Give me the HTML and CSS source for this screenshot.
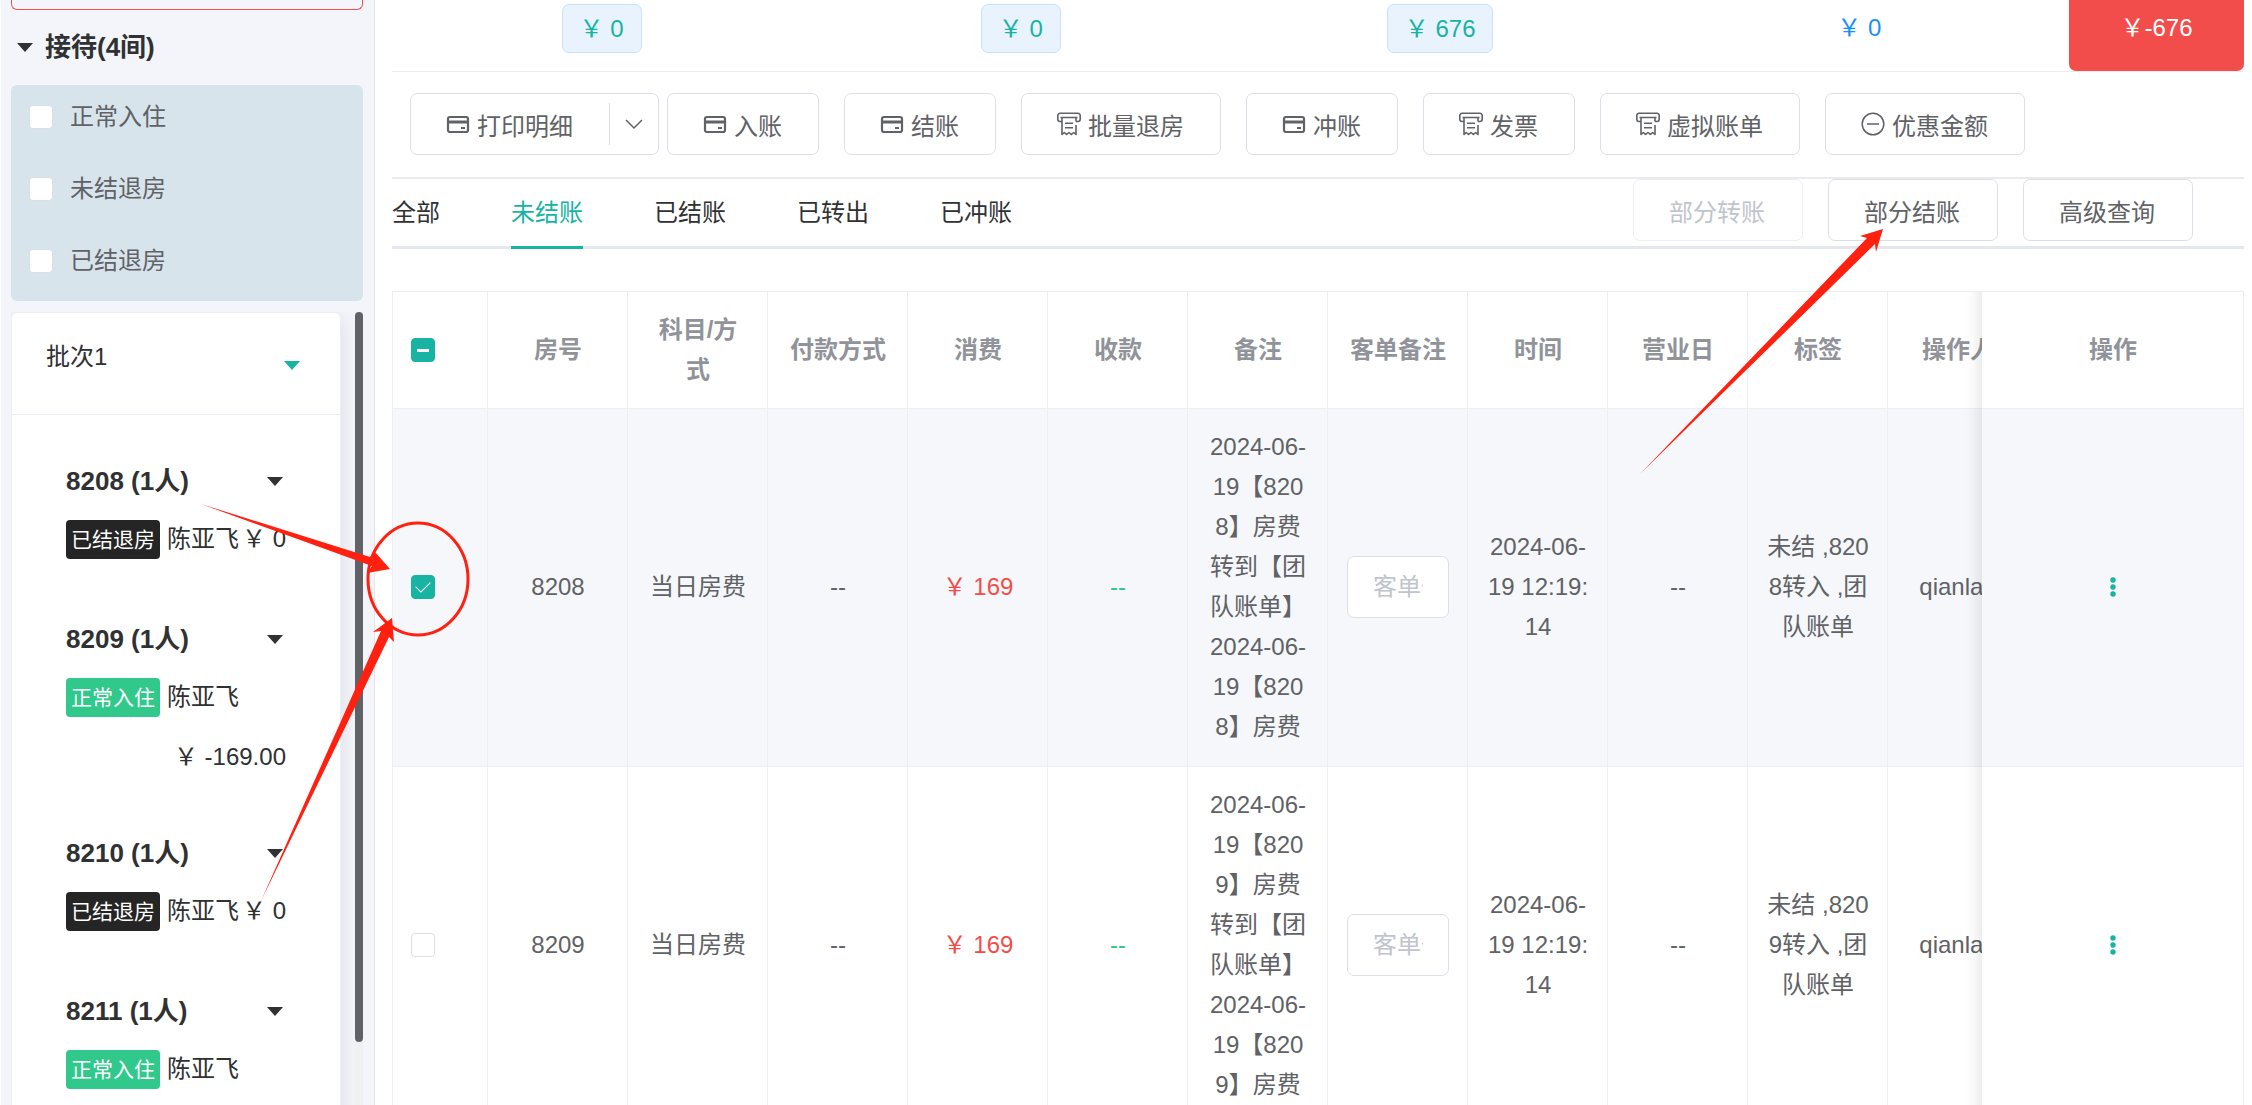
FILE: index.html
```html
<!DOCTYPE html>
<html lang="zh-CN">
<head>
    <meta charset="UTF-8">
    <meta name="viewport" content="width=device-width, initial-scale=1.0">
    <title>团队账单</title>
    <link rel="stylesheet" href="styles.css">
</head>
<body>
    <!-- Shared icons -->
    <svg class="icon-defs" aria-hidden="true">
        <symbol id="icon-card" viewBox="0 0 24 24">
            <rect x="2" y="5" width="20" height="15" rx="2" fill="none" stroke="currentColor" stroke-width="2.200"/>
            <path d="M2 10h20" stroke="currentColor" stroke-width="3"/>
            <path d="M15 16h4" stroke="currentColor" stroke-width="2"/>
        </symbol>
        <symbol id="icon-receipt" viewBox="0 0 24 24">
            <g fill="none" stroke="currentColor" stroke-width="1.600" stroke-linejoin="round">
                <path d="M5 9.500H3A2.200 2.200 0 0 1 .8 7.300V3.500A2.200 2.200 0 0 1 3 1.300h18A2.200 2.200 0 0 1 23.200 3.500v3.800A2.200 2.200 0 0 1 21 9.500h-2"/>
                <path d="M3.500 5.500h17M5 5.500V22.500l2.300-2 2.300 2 2.400-2 2.400 2 2.300-2 2.300 2V13M19 5.500v4M8 11.200h8M8 15.700h8"/>
            </g>
        </symbol>
        <symbol id="icon-minus" viewBox="0 0 24 24">
            <g fill="none" stroke="currentColor" stroke-width="1.500">
                <circle cx="12" cy="12" r="10.800"/>
                <path d="M6 12h12"/>
            </g>
        </symbol>
    </svg>

    <div class="app">
        <aside class="sidebar">
            <div class="alert-card"></div>
            <h2 class="section-title"><span class="caret"></span>接待(4间)</h2>

            <div class="status-filter">
                <label class="filter-item"><input type="checkbox" class="checkbox">正常入住</label>
                <label class="filter-item"><input type="checkbox" class="checkbox">未结退房</label>
                <label class="filter-item"><input type="checkbox" class="checkbox">已结退房</label>
            </div>

            <div class="room-scroll">
                <div class="room-view">
                    <div class="batch-card">
                        <div class="batch-header">批次1<span class="caret caret-teal"></span></div>
                        <div class="room-list">
                            <div class="room">
                                <h3 class="room-title">8208 (1人)<span class="caret"></span></h3>
                                <div class="room-meta">
                                    <span class="tag tag-dark">已结退房</span>
                                    <span class="guest">陈亚飞</span>
                                    <span class="balance">￥ 0</span>
                                </div>
                            </div>
                            <div class="room">
                                <h3 class="room-title">8209 (1人)<span class="caret"></span></h3>
                                <div class="room-meta">
                                    <span class="tag tag-green">正常入住</span>
                                    <span class="guest">陈亚飞</span>
                                    <span class="balance">￥ -169.00</span>
                                </div>
                            </div>
                            <div class="room">
                                <h3 class="room-title">8210 (1人)<span class="caret"></span></h3>
                                <div class="room-meta">
                                    <span class="tag tag-dark">已结退房</span>
                                    <span class="guest">陈亚飞</span>
                                    <span class="balance">￥ 0</span>
                                </div>
                            </div>
                            <div class="room">
                                <h3 class="room-title">8211 (1人)<span class="caret"></span></h3>
                                <div class="room-meta">
                                    <span class="tag tag-green">正常入住</span>
                                    <span class="guest">陈亚飞</span>
                                </div>
                            </div>
                        </div>
                    </div>
                </div>
                <div class="scroll-track"><div class="scroll-thumb"></div></div>
            </div>
        </aside>

        <main class="main">
            <div class="summary">
                <div class="summary-cell"><span class="amount-tag">￥ 0</span></div>
                <div class="summary-cell"><span class="amount-tag">￥ 0</span></div>
                <div class="summary-cell"><span class="amount-tag">￥ 676</span></div>
                <div class="summary-cell summary-blue">￥ 0</div>
                <div class="summary-cell summary-red">￥-676</div>
            </div>

            <div class="toolbar">
                <div class="split-button">
                    <button type="button" class="split-main"><svg class="icon"><use href="#icon-card"/></svg>打印明细</button>
                    <button type="button" class="split-arrow" aria-label="更多">
                        <svg width="18" height="12" viewBox="0 0 18 12"><path d="M1 2l8 8 8-8" fill="none" stroke="currentColor" stroke-width="1.500"/></svg>
                    </button>
                </div>
                <div class="button-group">
                    <button type="button" class="btn"><svg class="icon"><use href="#icon-card"/></svg>入账</button>
                    <button type="button" class="btn"><svg class="icon"><use href="#icon-card"/></svg>结账</button>
                    <button type="button" class="btn"><svg class="icon"><use href="#icon-receipt"/></svg>批量退房</button>
                    <button type="button" class="btn"><svg class="icon"><use href="#icon-card"/></svg>冲账</button>
                    <button type="button" class="btn"><svg class="icon"><use href="#icon-receipt"/></svg>发票</button>
                    <button type="button" class="btn"><svg class="icon"><use href="#icon-receipt"/></svg>虚拟账单</button>
                    <button type="button" class="btn"><svg class="icon"><use href="#icon-minus"/></svg>优惠金额</button>
                </div>
            </div>

            <div class="tab-bar">
                <nav class="tabs">
                    <a href="#all" class="tab">全部</a>
                    <a href="#open" class="tab tab-active">未结账</a>
                    <a href="#settled" class="tab">已结账</a>
                    <a href="#moved" class="tab">已转出</a>
                    <a href="#reversed" class="tab">已冲账</a>
                </nav>
                <div class="button-group">
                    <button type="button" class="btn" disabled>部分转账</button>
                    <button type="button" class="btn">部分结账</button>
                    <button type="button" class="btn">高级查询</button>
                </div>
            </div>

            <div class="table-wrap">
                <table class="bill-table">
                    <colgroup>
                        <col class="col-check">
                        <col span="11" class="col-data">
                        <col class="col-action">
                    </colgroup>
                    <thead>
                        <tr>
                            <th class="cell-check"><input type="checkbox" class="checkbox" id="checkAll" aria-label="全选"></th>
                            <th>房号</th>
                            <th>科目/方式</th>
                            <th>付款方式</th>
                            <th>消费</th>
                            <th>收款</th>
                            <th>备注</th>
                            <th>客单备注</th>
                            <th>时间</th>
                            <th>营业日</th>
                            <th>标签</th>
                            <th>操作人</th>
                            <th class="cell-action">操作</th>
                        </tr>
                    </thead>
                    <tbody>
                        <tr class="row-selected">
                            <td class="cell-check"><input type="checkbox" class="checkbox" aria-label="选择8208" checked></td>
                            <td>8208</td>
                            <td>当日房费</td>
                            <td>--</td>
                            <td class="text-red">￥ 169</td>
                            <td class="text-green">--</td>
                            <td>2024-06-19【8208】房费转到【团队账单】2024-06-19【8208】房费</td>
                            <td><input type="text" class="note-input" placeholder="客单备注" aria-label="客单备注"></td>
                            <td>2024-06-19 12:19:14</td>
                            <td>--</td>
                            <td>未结 ,8208转入 ,团队账单</td>
                            <td>qianlan</td>
                            <td class="cell-action">
                                <button type="button" class="more-button" aria-label="更多操作">
                                    <svg width="6" height="20" viewBox="0 0 6 20" fill="currentColor"><circle cx="3" cy="3" r="2.700"/><circle cx="3" cy="10" r="2.700"/><circle cx="3" cy="17" r="2.700"/></svg>
                                </button>
                            </td>
                        </tr>
                        <tr>
                            <td class="cell-check"><input type="checkbox" class="checkbox" aria-label="选择8209"></td>
                            <td>8209</td>
                            <td>当日房费</td>
                            <td>--</td>
                            <td class="text-red">￥ 169</td>
                            <td class="text-green">--</td>
                            <td>2024-06-19【8209】房费转到【团队账单】2024-06-19【8209】房费</td>
                            <td><input type="text" class="note-input" placeholder="客单备注" aria-label="客单备注"></td>
                            <td>2024-06-19 12:19:14</td>
                            <td>--</td>
                            <td>未结 ,8209转入 ,团队账单</td>
                            <td>qianlan</td>
                            <td class="cell-action">
                                <button type="button" class="more-button" aria-label="更多操作">
                                    <svg width="6" height="20" viewBox="0 0 6 20" fill="currentColor"><circle cx="3" cy="3" r="2.700"/><circle cx="3" cy="10" r="2.700"/><circle cx="3" cy="17" r="2.700"/></svg>
                                </button>
                            </td>
                        </tr>
                    </tbody>
                </table>
            </div>
        </main>

        <!-- Red guide marks drawn over the page -->
        <svg class="marks" aria-hidden="true">
            <ellipse cx="418" cy="579" rx="50" ry="56" fill="none" stroke="#ff2010" stroke-width="3"/>
            <polygon points="201,504 370,557 375,552 390,569 367,573 372,566" fill="#ff2010"/>
            <polygon points="261,901 381,631 373,632 392,618 394,642 389,637" fill="#ff2010"/>
            <polygon points="1640,474 1867,238 1860,236 1883,229 1876,252 1875,244" fill="#ff2010"/>
        </svg>
    </div>

    <script>
        // Only some rows are selected
        document.getElementById('checkAll').indeterminate = true;
    </script>
</body>
</html>
```

FILE: styles.css
```css
* {
    box-sizing: border-box;
}

body {
    margin: 0;
    font-family: "Liberation Sans", "Noto Sans CJK SC", sans-serif;
    font-size: 24px;
    line-height: 40px;
    color: #303133;
    background-color: #fff;
}

button,
input {
    font-family: inherit;
    font-size: inherit;
    color: inherit;
}

h2,
h3 {
    margin: 0;
    font-size: 26px;
}

.icon-defs {
    display: none;
}

.app {
    position: relative;
    display: flex;
    height: 100vh;
    overflow: hidden;
}

/* Sidebar */
.sidebar {
    display: flex;
    flex-direction: column;
    flex: none;
    width: 374px;
    margin-left: 1px;
    padding: 0 11px 0 10px;
    background-color: #f3f5fa;
    border-right: 1px solid #e4e4e6;
}

.alert-card {
    height: 10px;
    border: 1px solid #f05050;
    border-top: none;
    border-radius: 0 0 6px 6px;
}

.section-title {
    display: flex;
    align-items: center;
    gap: 12px;
    padding: 17px 6px 18px;
}

.caret {
    border: 8px solid transparent;
    border-top: 9px solid #303133;
    border-bottom: none;
}

.caret-teal {
    border-top-color: #17b3a3;
}

.status-filter {
    padding: 1px 0 9px 18px;
    border-radius: 6px;
    background-color: #d8e4ec;
}

.filter-item {
    display: flex;
    align-items: center;
    gap: 17px;
    height: 62px;
    margin-bottom: 10px;
    color: #606266;
}

.filter-item:last-child {
    margin-bottom: 0;
}

.checkbox {
    appearance: none;
    display: grid;
    place-items: center;
    width: 24px;
    height: 24px;
    margin: 0;
    border: 1px solid #dcdfe6;
    border-radius: 4px;
    background-color: #fff;
}

.checkbox:checked,
.checkbox:indeterminate {
    border-color: #17b3a3;
    background-color: #17b3a3;
}

.checkbox:checked::after {
    content: '';
    width: 7px;
    height: 13px;
    margin-bottom: 4px;
    border: solid #fff;
    border-width: 0 1px 1px 0;
    transform: rotate(45deg);
}

.checkbox:indeterminate::after {
    content: '';
    width: 12px;
    height: 3px;
    background-color: #fff;
}

.room-scroll {
    display: flex;
    flex: 1;
    min-height: 0;
    margin-top: 11px;
}

.room-view {
    flex: 1;
    overflow: hidden;
    padding-right: 14px;
}

.batch-card {
    border: 1px solid #ebeef5;
    border-radius: 6px;
    background-color: #fff;
    box-shadow: 0 4px 21px rgba(0, 0, 0, 0.1);
}

.batch-header {
    display: flex;
    align-items: flex-end;
    justify-content: space-between;
    padding: 31px 40px 44px 34px;
    line-height: 26px;
    border-bottom: 1px solid #ebeef5;
}

.room-list {
    padding: 46px 54px 0;
}

.room {
    padding-bottom: 60px;
}

.room-title {
    display: flex;
    align-items: center;
    justify-content: space-between;
    margin-bottom: 18px;
    padding-right: 3px;
}

.room-meta {
    display: flex;
    flex-wrap: wrap;
    align-items: center;
    row-gap: 24px;
}

.tag {
    padding: 0 5px;
    font-size: 21px;
    line-height: 39px;
    color: #fff;
    border-radius: 4px;
}

.tag-dark {
    background-color: #252525;
}

.tag-green {
    background-color: #30c88b;
}

.guest {
    margin-left: 7px;
}

.balance {
    margin-left: auto;
    line-height: 32px;
}

.scroll-track {
    width: 8px;
    background-color: #f0f0f0;
}

.scroll-thumb {
    height: 92%;
    border-radius: 4px;
    background-color: #606266;
}

/* Main area */
.main {
    flex: 1;
    min-width: 0;
    padding: 0 8px 0 17px;
    overflow: hidden;
}

.summary {
    display: grid;
    grid-template-columns: repeat(4, 1fr) 175px;
    height: 72px;
    border-bottom: 1px solid #ebeef0;
}

.summary-cell {
    display: flex;
    justify-content: center;
    align-items: flex-start;
    padding-top: 4px;
    line-height: 47px;
    color: #17b3a3;
}

.amount-tag {
    padding: 0 17px;
    border: 1px solid #c6e2ff;
    border-radius: 7px;
    background-color: #e8f3fe;
}

.summary-blue {
    color: #1890ff;
}

.summary-red {
    color: #fff;
    background-color: #f34d4b;
    border-radius: 0 0 7px 7px;
}

.toolbar {
    display: flex;
    gap: 8px;
    padding: 21px 18px 22px;
    border-bottom: 2px solid #ebebeb;
}

.button-group {
    display: flex;
    gap: 25px;
}

.btn,
.split-button {
    display: flex;
    align-items: center;
    height: 62px;
    padding: 0 36px 0 35px;
    color: #606266;
    white-space: nowrap;
    border: 1px solid #dcdfe6;
    border-radius: 7px;
    background-color: #fff;
}

.btn:disabled {
    color: #c0c4cc;
    border-color: #ebeef5;
}

.icon {
    width: 24px;
    height: 24px;
    margin-right: 7px;
}

.split-button {
    padding: 0;
}

.split-main,
.split-arrow {
    display: flex;
    align-items: center;
    padding: 0;
    border: none;
    background: none;
}

.split-main {
    padding: 0 36px 0 35px;
}

.split-arrow {
    justify-content: center;
    width: 49px;
    height: 42px;
    border-left: 1px solid #dcdfe6;
}

.tab-bar {
    display: flex;
    justify-content: space-between;
    height: 70px;
    padding-right: 51px;
    border-bottom: 3px solid #e4e7ed;
}

.tab-bar .btn {
    padding: 0 37px 0 35px;
}

.tabs {
    display: flex;
    gap: 71px;
}

.tab {
    height: 70px;
    line-height: 68px;
    color: #303133;
    text-decoration: none;
}

.tab-active {
    color: #17b3a3;
    border-bottom: 3px solid #17b3a3;
}

/* Table */
.table-wrap {
    margin-top: 42px;
    overflow-x: auto;
    border-top: 1px solid #ebeef5;
    border-left: 1px solid #ebeef5;
}

.bill-table {
    width: 1897px;
    table-layout: fixed;
    border-collapse: separate;
    border-spacing: 0;
    text-align: center;
    word-break: break-all;
}

.col-check {
    width: 95px;
}

.col-data {
    width: 140px;
}

.col-action {
    width: 262px;
}

.bill-table th,
.bill-table td {
    padding: 18px 18px 19px 19px;
    color: #606266;
    border-right: 1px solid #ebeef5;
    border-bottom: 1px solid #ebeef5;
    background-color: #fff;
}

.bill-table th {
    padding-bottom: 18px;
    color: #909399;
}

.bill-table .cell-check {
    padding-left: 18px;
}

.bill-table .row-selected td {
    background-color: #f5f7fa;
}

.bill-table .text-red {
    color: #f34d4b;
}

.bill-table .text-green {
    color: #30c88b;
}

.note-input {
    display: block;
    width: 100%;
    height: 62px;
    padding: 0 25px;
    border: 1px solid #dcdfe6;
    border-radius: 7px;
    background-color: #fff;
}

.note-input::placeholder {
    color: #c0c4cc;
}

.bill-table .cell-action {
    position: sticky;
    right: 0;
}

/* Shadow on the left of the fixed column */
.cell-action::before {
    content: '';
    position: absolute;
    top: 0;
    bottom: -1px;
    left: -16px;
    width: 16px;
    background: linear-gradient(to right, transparent, rgba(0, 0, 0, 0.02) 40%, rgba(0, 0, 0, 0.07));
}

.more-button {
    display: block;
    margin: 0 auto;
    padding: 0 8px;
    border: none;
    color: #17b3a3;
    background: none;
}

.more-button svg {
    display: block;
}

.marks {
    position: absolute;
    top: 0;
    left: 0;
    width: 100%;
    height: 100%;
    pointer-events: none;
}
```
